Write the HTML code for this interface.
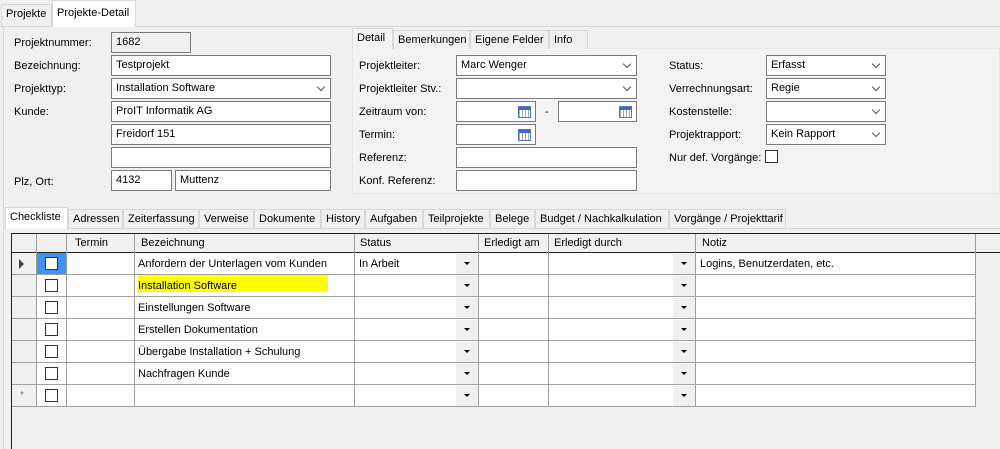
<!DOCTYPE html><html><head><style>
*{box-sizing:border-box}
body{margin:0;width:1000px;height:449px;background:#f0f0f0;font-family:"Liberation Sans",sans-serif;font-size:11px;color:#000;position:relative;overflow:hidden}
.a{position:absolute}
.l{position:absolute;white-space:nowrap}
.i{position:absolute;height:21px;background:#fff;border:1px solid #7a7a7a;padding:3px 0 0 4px;white-space:nowrap}
.dd::after{content:"";position:absolute;right:6px;top:5px;width:5px;height:5px;border-right:1px solid #555;border-bottom:1px solid #555;transform:rotate(45deg)}
.cal::after{content:"";position:absolute;right:4px;top:4px;width:11px;height:10px;background:linear-gradient(#3a6ad0 0 3px,transparent 3px),repeating-linear-gradient(90deg,#9ab 0 1px,#fff 1px 3px);border:1px solid #57a}
.t{position:absolute;height:19px;border:1px solid #d9d9d9;border-bottom:none;background:#f0f0f0;padding:3px 0 0 4px;white-space:nowrap}
.act{background:#fff;border-color:#d9d9d9}
.cb{position:absolute;width:13px;height:13px;border:1px solid #333;background:#fff}
.v{position:absolute;width:1px;background:#a0a0a0}
.h{position:absolute;height:1px;background:#a0a0a0}
.ar{position:absolute;width:22px;height:20px;background:#f0f0f0}
.ar::after{content:"";position:absolute;left:8px;top:8px;border-left:3px solid transparent;border-right:3px solid transparent;border-top:3px solid #000}
</style></head><body>
<div class="a" style="left:0;top:26px;width:1000px;height:1px;background:#d9d9d9"></div>
<div class="t" style="left:1px;top:4px;width:51px;height:22px">Projekte</div>
<div class="t act" style="left:52px;top:0;width:84px;height:27px;padding-top:6px">Projekte-Detail</div>
<div class="a" style="left:3px;top:27px;width:1px;height:422px;background:#d9d9d9"></div>

<div class="l" style="left:14px;top:37px">Projektnummer:</div>
<div class="i" style="left:111px;top:32px;width:80px;background:#f0f0f0">1682</div>
<div class="l" style="left:14px;top:60px">Bezeichnung:</div>
<div class="i" style="left:111px;top:55px;width:220px">Testprojekt</div>
<div class="l" style="left:14px;top:83px">Projekttyp:</div>
<div class="i dd" style="left:111px;top:78px;width:220px">Installation Software</div>
<div class="l" style="left:14px;top:106px">Kunde:</div>
<div class="i" style="left:111px;top:101px;width:220px">ProIT Informatik AG</div>
<div class="i" style="left:111px;top:124px;width:220px">Freidorf 151</div>
<div class="i" style="left:111px;top:147px;width:220px"></div>
<div class="l" style="left:14px;top:176px">Plz, Ort:</div>
<div class="i" style="left:111px;top:170px;width:61px">4132</div>
<div class="i" style="left:175px;top:170px;width:156px">Muttenz</div>

<div class="a" style="left:352px;top:48px;width:648px;height:146px;background:#f3f3f3;border:1px solid #e6e6e6"></div>
<div class="t" style="left:393px;top:30px;width:77px">Bemerkungen</div>
<div class="t" style="left:470px;top:30px;width:79px">Eigene Felder</div>
<div class="t" style="left:549px;top:30px;width:39px">Info</div>
<div class="t act" style="left:352px;top:28px;width:41px;height:21px;background:#f3f3f3">Detail</div>

<div class="l" style="left:359px;top:60px">Projektleiter:</div>
<div class="i dd" style="left:456px;top:55px;width:181px">Marc Wenger</div>
<div class="l" style="left:359px;top:83px">Projektleiter Stv.:</div>
<div class="i dd" style="left:456px;top:78px;width:181px"></div>
<div class="l" style="left:359px;top:106px">Zeitraum von:</div>
<div class="i cal" style="left:456px;top:101px;width:80px"></div>
<div class="l" style="left:545px;top:106px">-</div>
<div class="i cal" style="left:558px;top:101px;width:79px"></div>
<div class="l" style="left:359px;top:129px">Termin:</div>
<div class="i cal" style="left:456px;top:124px;width:80px"></div>
<div class="l" style="left:359px;top:152px">Referenz:</div>
<div class="i" style="left:456px;top:147px;width:181px"></div>
<div class="l" style="left:359px;top:175px">Konf. Referenz:</div>
<div class="i" style="left:456px;top:170px;width:181px"></div>

<div class="l" style="left:669px;top:60px">Status:</div>
<div class="i dd" style="left:766px;top:55px;width:120px">Erfasst</div>
<div class="l" style="left:669px;top:83px">Verrechnungsart:</div>
<div class="i dd" style="left:766px;top:78px;width:120px">Regie</div>
<div class="l" style="left:669px;top:106px">Kostenstelle:</div>
<div class="i dd" style="left:766px;top:101px;width:120px"></div>
<div class="l" style="left:669px;top:129px">Projektrapport:</div>
<div class="i dd" style="left:766px;top:124px;width:120px">Kein Rapport</div>
<div class="l" style="left:669px;top:152px">Nur def. Vorgänge:</div>
<div class="cb" style="left:765px;top:150px"></div>

<div class="a" style="left:4px;top:228px;width:996px;height:1px;background:#d9d9d9"></div>
<div class="t" style="left:68px;top:209px;width:55px">Adressen</div>
<div class="t" style="left:123px;top:209px;width:76px">Zeiterfassung</div>
<div class="t" style="left:199px;top:209px;width:55px">Verweise</div>
<div class="t" style="left:254px;top:209px;width:67px">Dokumente</div>
<div class="t" style="left:321px;top:209px;width:44px">History</div>
<div class="t" style="left:365px;top:209px;width:58px">Aufgaben</div>
<div class="t" style="left:423px;top:209px;width:67px">Teilprojekte</div>
<div class="t" style="left:490px;top:209px;width:45px">Belege</div>
<div class="t" style="left:535px;top:209px;width:134px">Budget / Nachkalkulation</div>
<div class="t" style="left:669px;top:209px;width:117px">Vorgänge / Projekttarif</div>
<div class="t act" style="left:5px;top:207px;width:63px;height:22px">Checkliste</div>

<div class="a" style="left:11px;top:233px;width:1px;height:216px;background:#222"></div>
<div class="a" style="left:11px;top:233px;width:989px;height:1px;background:#222"></div>
<div class="a" style="left:12px;top:234px;width:963px;height:18px;background:#f0f0f0"></div>
<div class="a" style="left:11px;top:252px;width:989px;height:1px;background:#222"></div>
<div class="a" style="left:36px;top:253px;width:939px;height:154px;background:#fff"></div>
<div class="a" style="left:12px;top:253px;width:24px;height:154px;background:#f0f0f0"></div>
<div class="a" style="left:36px;top:253px;width:30px;height:22px;background:#3d95ee"></div>
<div class="a" style="left:138px;top:274px;width:190px;height:18px;background:#ffff00"></div>

<div class="l" style="left:75px;top:237px">Termin</div>
<div class="l" style="left:141px;top:237px">Bezeichnung</div>
<div class="l" style="left:360px;top:237px">Status</div>
<div class="l" style="left:484px;top:237px">Erledigt am</div>
<div class="l" style="left:554px;top:237px">Erledigt durch</div>
<div class="l" style="left:702px;top:237px">Notiz</div>

<div class="v" style="left:36px;top:234px;height:173px"></div>
<div class="v" style="left:66px;top:234px;height:173px"></div>
<div class="v" style="left:134px;top:234px;height:173px"></div>
<div class="v" style="left:354px;top:234px;height:173px"></div>
<div class="v" style="left:478px;top:234px;height:173px"></div>
<div class="v" style="left:548px;top:234px;height:173px"></div>
<div class="v" style="left:695px;top:234px;height:173px"></div>
<div class="v" style="left:975px;top:234px;height:173px"></div>
<div class="h" style="left:12px;top:274px;width:963px"></div>
<div class="h" style="left:12px;top:296px;width:963px"></div>
<div class="h" style="left:12px;top:318px;width:963px"></div>
<div class="h" style="left:12px;top:340px;width:963px"></div>
<div class="h" style="left:12px;top:362px;width:963px"></div>
<div class="h" style="left:12px;top:384px;width:963px"></div>
<div class="h" style="left:12px;top:406px;width:963px"></div>

<div class="a" style="left:19px;top:259px;border-top:5px solid transparent;border-bottom:5px solid transparent;border-left:5px solid #444"></div>
<div class="l" style="left:20px;top:390px;color:#777;font-size:10px">*</div>

<div class="cb" style="left:45px;top:257px"></div>
<div class="cb" style="left:45px;top:279px"></div>
<div class="cb" style="left:45px;top:301px"></div>
<div class="cb" style="left:45px;top:323px"></div>
<div class="cb" style="left:45px;top:345px"></div>
<div class="cb" style="left:45px;top:367px"></div>
<div class="cb" style="left:45px;top:389px"></div>

<div class="l" style="left:138px;top:258px">Anfordern der Unterlagen vom Kunden</div>
<div class="l" style="left:138px;top:280px">Installation Software</div>
<div class="l" style="left:138px;top:302px">Einstellungen Software</div>
<div class="l" style="left:138px;top:324px">Erstellen Dokumentation</div>
<div class="l" style="left:138px;top:346px">Übergabe Installation + Schulung</div>
<div class="l" style="left:138px;top:368px">Nachfragen Kunde</div>
<div class="l" style="left:359px;top:258px">In Arbeit</div>
<div class="l" style="left:700px;top:258px">Logins, Benutzerdaten, etc.</div>

<div class="ar" style="left:456px;top:254px"></div><div class="ar" style="left:456px;top:276px"></div><div class="ar" style="left:456px;top:298px"></div><div class="ar" style="left:456px;top:320px"></div><div class="ar" style="left:456px;top:342px"></div><div class="ar" style="left:456px;top:364px"></div><div class="ar" style="left:456px;top:386px"></div>
<div class="ar" style="left:673px;top:254px"></div><div class="ar" style="left:673px;top:276px"></div><div class="ar" style="left:673px;top:298px"></div><div class="ar" style="left:673px;top:320px"></div><div class="ar" style="left:673px;top:342px"></div><div class="ar" style="left:673px;top:364px"></div><div class="ar" style="left:673px;top:386px"></div>
</body></html>
